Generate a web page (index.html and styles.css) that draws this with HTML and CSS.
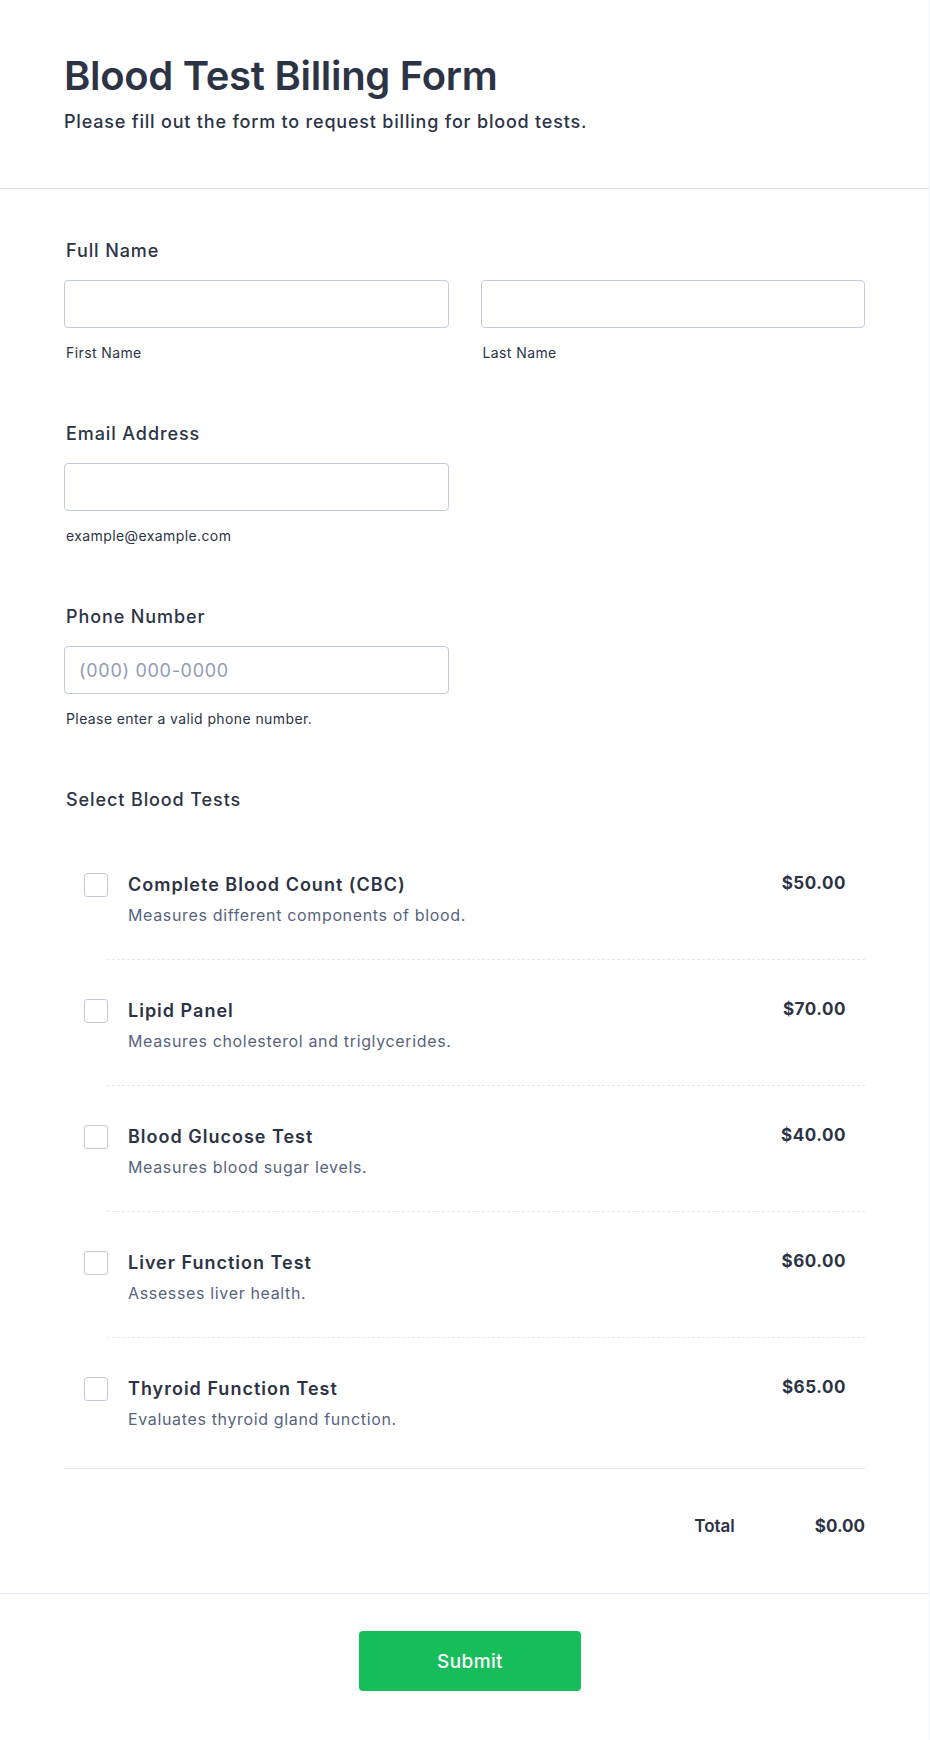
FILE: index.html
```html
<!DOCTYPE html>
<html lang="en">
<head>
    <meta charset="UTF-8">
    <meta name="viewport" content="width=device-width, initial-scale=1.0">
    <title>Blood Test Billing Form</title>
    <link rel="stylesheet" href="styles.css">
</head>
<body>
    <div class="form-card">
        <div class="form-header">
            <h1>Blood Test Billing Form</h1>
            <p class="subtitle">Please fill out the form to request billing for blood tests.</p>
        </div>

        <form class="form-body">
            <div class="field">
                <label class="field-label">Full Name</label>
                <div class="name-row">
                    <div>
                        <input type="text" id="firstName">
                        <label class="sublabel" for="firstName">First Name</label>
                    </div>
                    <div>
                        <input type="text" id="lastName">
                        <label class="sublabel" for="lastName">Last Name</label>
                    </div>
                </div>
            </div>

            <div class="field">
                <label class="field-label" for="email">Email Address</label>
                <input type="email" id="email" class="half">
                <label class="sublabel" for="email">example@example.com</label>
            </div>

            <div class="field">
                <label class="field-label" for="phone">Phone Number</label>
                <input type="tel" id="phone" class="half" placeholder="(000) 000-0000">
                <label class="sublabel" for="phone">Please enter a valid phone number.</label>
            </div>

            <div class="field">
                <label class="field-label">Select Blood Tests</label>
                <div class="tests">
                    <label class="test">
                        <span class="check"></span>
                        <span class="test-info">
                            <span class="test-name">Complete Blood Count (CBC)</span>
                            <span class="test-desc">Measures different components of blood.</span>
                        </span>
                        <span class="test-price">$50.00</span>
                    </label>
                    <div class="test-sep"></div>
                    <label class="test">
                        <span class="check"></span>
                        <span class="test-info">
                            <span class="test-name">Lipid Panel</span>
                            <span class="test-desc">Measures cholesterol and triglycerides.</span>
                        </span>
                        <span class="test-price">$70.00</span>
                    </label>
                    <div class="test-sep"></div>
                    <label class="test">
                        <span class="check"></span>
                        <span class="test-info">
                            <span class="test-name">Blood Glucose Test</span>
                            <span class="test-desc">Measures blood sugar levels.</span>
                        </span>
                        <span class="test-price">$40.00</span>
                    </label>
                    <div class="test-sep"></div>
                    <label class="test">
                        <span class="check"></span>
                        <span class="test-info">
                            <span class="test-name">Liver Function Test</span>
                            <span class="test-desc">Assesses liver health.</span>
                        </span>
                        <span class="test-price">$60.00</span>
                    </label>
                    <div class="test-sep"></div>
                    <label class="test last">
                        <span class="check"></span>
                        <span class="test-info">
                            <span class="test-name">Thyroid Function Test</span>
                            <span class="test-desc">Evaluates thyroid gland function.</span>
                        </span>
                        <span class="test-price">$65.00</span>
                    </label>
                </div>
                <div class="total-row">
                    <span class="total-label">Total</span>
                    <span class="total-value">$0.00</span>
                </div>
            </div>
        </form>

        <div class="form-footer">
            <button type="button" class="submit">Submit</button>
        </div>
    </div>
</body>
</html>
```

FILE: styles.css
```css
body {
    margin: 0;
    background-color: #ffffff;
    font-family: Inter, "Noto Sans", sans-serif;
    color: #2c3345;
}
.form-card {
    border-right: 1px solid #f3f4f8;
    min-height: 1740px;
    box-sizing: border-box;
}
.form-header {
    padding: 52px 64px 54px;
    border-bottom: 1px solid #dcdfea;
}
h1 {
    margin: 0;
    font-size: 40px;
    line-height: 48px;
    font-weight: 600;
    letter-spacing: -0.3px;
}
.subtitle {
    margin: 10px 0 0;
    font-size: 18px;
    line-height: 24px;
    font-weight: 500;
    letter-spacing: 0.8px;
}
.form-body {
    padding: 50px 64px 0;
}
.field {
    margin-bottom: 60px;
}
.field-label {
    display: block;
    margin: 0 0 17px 2px;
    font-size: 18px;
    line-height: 24px;
    font-weight: 500;
    letter-spacing: 0.9px;
}
.name-row {
    display: grid;
    grid-template-columns: 1fr 1fr;
    gap: 32px;
}
input {
    display: block;
    width: 100%;
    height: 48px;
    box-sizing: border-box;
    padding: 0 14px;
    border: 1px solid #c3cad8;
    border-radius: 4px;
    font-family: inherit;
    font-size: 18px;
    letter-spacing: 0.7px;
    color: #2c3345;
    background: #fff;
}
input::placeholder {
    color: #8f9bb3;
}
input.half {
    width: calc(50% - 16px);
}
.sublabel {
    display: block;
    margin: 16px 0 0 2px;
    font-size: 14px;
    line-height: 18px;
    letter-spacing: 0.4px;
}
.tests {
    margin-top: 22px;
}
.test {
    display: flex;
    align-items: flex-start;
    padding: 39px 19px 32px 20px;
}
.test.last {
    padding-bottom: 37px;
}
.check {
    flex: none;
    width: 24px;
    height: 24px;
    box-sizing: border-box;
    border: 1px solid #c3cad8;
    border-radius: 3px;
    margin-right: 20px;
}
.test-info {
    flex: 1;
    display: flex;
    flex-direction: column;
    gap: 6px;
}
.test-name {
    font-size: 18px;
    line-height: 24px;
    font-weight: 600;
    letter-spacing: 1px;
}
.test-desc {
    font-size: 16px;
    line-height: 24px;
    color: #57647e;
    letter-spacing: 0.65px;
}
.test-price {
    font-size: 17px;
    line-height: 20px;
    font-weight: 700;
    letter-spacing: 0.55px;
}
.test-sep {
    margin-left: 43px;
    border-top: 1px dashed #e6e8f0;
}
.total-row {
    display: flex;
    justify-content: flex-end;
    gap: 80px;
    padding-top: 45px;
    border-top: 1px solid #e3e5ee;
    font-size: 17px;
    line-height: 24px;
    font-weight: 700;
}
.total-label {
    font-weight: 600;
}
.form-body .field:last-child {
    margin-bottom: 55px;
}
.form-footer {
    display: flex;
    justify-content: center;
    padding: 37px 0 49px 11px;
    border-top: 1px solid #e3e5f0;
}
.submit {
    width: 222px;
    height: 60px;
    border: none;
    border-radius: 4px;
    background-color: #18bd5b;
    color: #ffffff;
    font-family: inherit;
    font-size: 19px;
    font-weight: 500;
    letter-spacing: 0.4px;
}
```
